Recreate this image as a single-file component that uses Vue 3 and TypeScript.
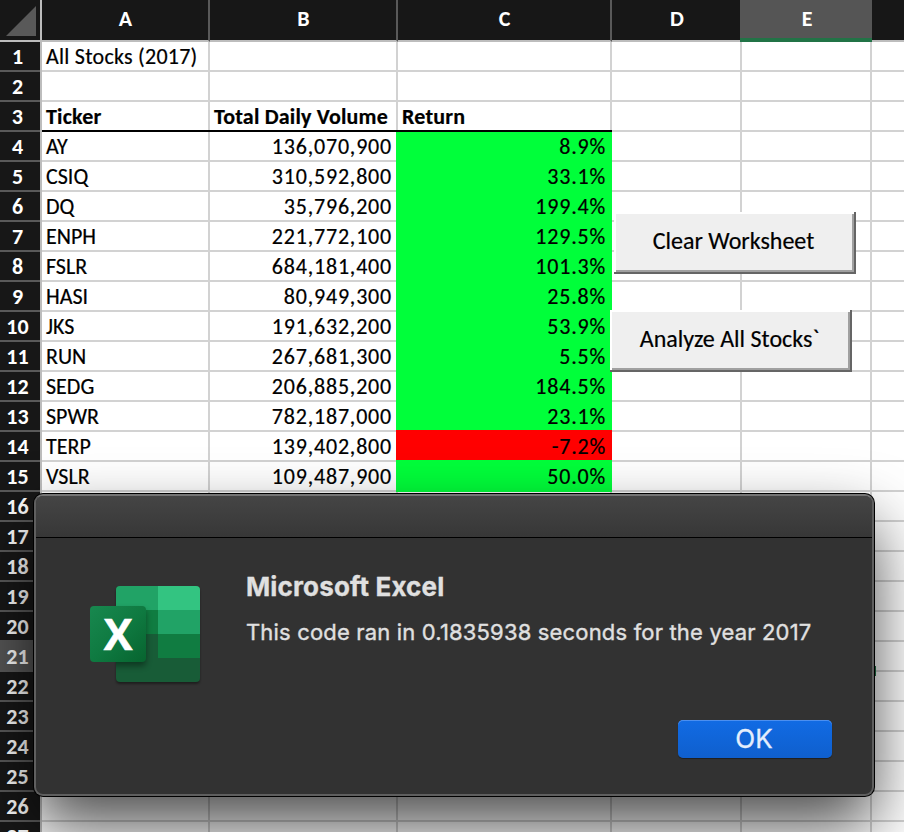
<script setup lang="ts">
interface Stock {
  ticker: string
  volume: string
  ret: string
}

interface Row {
  n: number
  a: string
  b: string
  c: string
  kind: 'plain' | 'head' | 'gain' | 'loss'
}

const columns: string[] = ['A', 'B', 'C', 'D', 'E', '']
const activeColumn = 'E'
const activeRow = 21

const stocks: Stock[] = [
  { ticker: 'AY', volume: '136,070,900', ret: '8.9%' },
  { ticker: 'CSIQ', volume: '310,592,800', ret: '33.1%' },
  { ticker: 'DQ', volume: '35,796,200', ret: '199.4%' },
  { ticker: 'ENPH', volume: '221,772,100', ret: '129.5%' },
  { ticker: 'FSLR', volume: '684,181,400', ret: '101.3%' },
  { ticker: 'HASI', volume: '80,949,300', ret: '25.8%' },
  { ticker: 'JKS', volume: '191,632,200', ret: '53.9%' },
  { ticker: 'RUN', volume: '267,681,300', ret: '5.5%' },
  { ticker: 'SEDG', volume: '206,885,200', ret: '184.5%' },
  { ticker: 'SPWR', volume: '782,187,000', ret: '23.1%' },
  { ticker: 'TERP', volume: '139,402,800', ret: '-7.2%' },
  { ticker: 'VSLR', volume: '109,487,900', ret: '50.0%' },
]

const rows: Row[] = Array.from({ length: 27 }, (_, i): Row => {
  const n = i + 1
  if (n === 1) return { n, a: 'All Stocks (2017)', b: '', c: '', kind: 'plain' }
  if (n === 3) return { n, a: 'Ticker', b: 'Total Daily Volume', c: 'Return', kind: 'head' }
  const s = stocks[n - 4]
  if (!s) return { n, a: '', b: '', c: '', kind: 'plain' }
  return { n, a: s.ticker, b: s.volume, c: s.ret, kind: s.ret.startsWith('-') ? 'loss' : 'gain' }
})
</script>

<template>
  <main class="window">
    <div class="sheet">
      <div class="line header">
        <div class="corner">
          <svg width="30" height="30" viewBox="0 0 30 30"><path d="M30 0V30H0Z" fill="#595959" /></svg>
        </div>
        <div v-for="(c, i) in columns" :key="i" class="col" :class="{ active: c === activeColumn, last: c === '' }">{{ c }}</div>
      </div>
      <div v-for="r in rows" :key="r.n" class="line" :class="r.kind">
        <div class="num" :class="{ active: r.n === activeRow, before: r.n === activeRow - 1 }">{{ r.n }}</div>
        <div class="cell a"><span>{{ r.a }}</span></div>
        <div class="cell b"><span>{{ r.b }}</span></div>
        <div class="cell c"><span>{{ r.c }}</span></div>
        <div class="cell"></div>
        <div class="cell"></div>
        <div class="cell last"></div>
      </div>
    </div>

    <button class="macro clear">Clear Worksheet</button>
    <button class="macro analyze">Analyze All Stocks`</button>
    <i class="handle"></i>

    <section class="dialog" role="dialog">
      <div class="titlebar"></div>
      <div class="content">
        <svg class="logo" width="118" height="112" viewBox="0 0 118 112">
          <defs>
            <linearGradient id="tile" x1="0" y1="0" x2="1" y2="1">
              <stop offset="0" stop-color="#18884f" />
              <stop offset="0.5" stop-color="#0f7a41" />
              <stop offset="1" stop-color="#07642f" />
            </linearGradient>
            <clipPath id="book"><rect x="30" y="6" width="84" height="96" rx="4" /></clipPath>
            <filter id="soft" x="-30%" y="-30%" width="160%" height="160%"><feGaussianBlur stdDeviation="3" /></filter>
            <filter id="edge" x="-10%" y="-10%" width="120%" height="120%"><feGaussianBlur stdDeviation="1.2" /></filter>
          </defs>
          <rect x="30" y="8" width="84" height="96" rx="4" fill="#000" opacity=".4" filter="url(#edge)" />
          <g clip-path="url(#book)">
            <rect x="30" y="6" width="84" height="96" fill="#185c37" />
            <rect x="30" y="6" width="42" height="24" fill="#21a366" />
            <rect x="72" y="6" width="42" height="24" fill="#33c481" />
            <rect x="30" y="30" width="42" height="24" fill="#107c41" />
            <rect x="72" y="30" width="42" height="24" fill="#21a366" />
            <rect x="72" y="54" width="42" height="24" fill="#107c41" />
            <rect x="4" y="30" width="56" height="56" rx="4" fill="#000" opacity=".4" filter="url(#soft)" />
          </g>
          <rect x="4" y="26" width="56" height="56" rx="4" fill="url(#tile)" />
          <text x="32.200" y="69.500" class="mark">X</text>
        </svg>
        <div class="message">
          <h1>Microsoft Excel</h1>
          <p>This code ran in 0.1835938 seconds for the year 2017</p>
        </div>
      </div>
      <div class="actions"><button class="ok">OK</button></div>
    </section>
  </main>
</template>

<style>
body {
  margin: 0;
  overflow: hidden;
}
</style>

<style scoped>
* {
  box-sizing: border-box;
}
.window {
  position: relative;
  width: 904px;
  height: 832px;
  overflow: hidden;
  background: #fff;
  font-family: Carlito, Lato, sans-serif;
  font-size: 22px;
  line-height: 26px;
  color: #000;
}
.line {
  display: grid;
  grid-template-columns: 42px 168px 188px 214px 130px 130px 32px;
  height: 30px;
  position: relative;
}
.header {
  height: 42px;
}
.corner,
.col {
  background: #171717;
  border-bottom: 2px solid #bdbdbd;
}
.corner {
  padding: 6px 0 0 6px;
  border-right: 2px solid #bdbdbd;
}
.corner svg {
  display: block;
}
.col {
  display: flex;
  align-items: center;
  justify-content: center;
  padding: 0 0 2px 1px;
  border-right: 2px solid #595959;
  color: #fff;
  font-weight: 700;
}
.col:nth-child(5) {
  padding-left: 0;
  border-right: 0;
}
.col.active {
  margin-left: -2px;
  padding: 0 0 0 2px;
  background: #555;
  border-right: 0;
  border-bottom: 4px solid #217346;
}
.col.last {
  border-right: 0;
}
.num {
  display: flex;
  align-items: center;
  justify-content: center;
  padding: 0 5px 0 0;
  background: #171717;
  border-right: 2px solid #bdbdbd;
  color: #fff;
  font-weight: 700;
  box-shadow: inset 0 -2px #595959;
}
.num.before {
  box-shadow: inset 0 -2px #555;
}
.num.active {
  background: #555;
}
.cell {
  display: flex;
  align-items: center;
  padding: 2px 4px 0;
  border-right: 2px solid #d2d2d2;
  border-bottom: 2px solid #d2d2d2;
  white-space: nowrap;
  -webkit-text-stroke: 0.2px currentColor;
}
.plain .a {
  letter-spacing: 0.25px;
}
.cell.last {
  border-right: 0;
}
.head {
  z-index: 2;
  font-weight: 700;
  letter-spacing: 0.2px;
}
.head .a,
.head .b,
.head .c {
  height: 28px;
  border-bottom: 0;
  box-shadow: 0 2px #000;
}
.gain .b,
.gain .c,
.loss .b,
.loss .c {
  justify-content: flex-end;
  letter-spacing: 0.8px;
}
.gain .c,
.loss .c {
  position: relative;
  margin: -2px 0 0 -2px;
  padding-top: 4px;
}
.gain .c {
  background: #00ff3a;
  border-color: #00ff3a;
}
.loss .c {
  background: #f00;
  border-color: #f00;
}
.gain + .loss .c {
  border-bottom-color: #00ff3a;
}
.macro {
  position: absolute;
  width: 242px;
  height: 62px;
  padding: 0 3px 5px 0;
  border: 0;
  background: #efefef;
  box-shadow: inset -2px -2px #656565, inset 2px 2px #fff, inset -4px -4px #a0a0a0;
  font: 400 24px Carlito, Lato, sans-serif;
  color: #000;
  z-index: 3;
  -webkit-text-stroke: 0.2px currentColor;
}
.clear {
  left: 614px;
  top: 212px;
}
.analyze {
  left: 610px;
  top: 310px;
}
.handle {
  position: absolute;
  left: 868px;
  top: 666px;
  width: 8px;
  height: 10px;
  background: #217346;
}
.dialog {
  position: absolute;
  z-index: 4;
  left: 34px;
  top: 494px;
  width: 840px;
  height: 302px;
  display: flex;
  flex-direction: column;
  border: 2px solid #5f5f5f;
  border-top-color: #757575;
  border-radius: 9px;
  background: #323232;
  box-shadow: 0 0 0 1px #000, 0 30px 64px rgba(0, 0, 0, 0.7);
  color: #e0e0e0;
  font-family: Inter, sans-serif;
}
.titlebar {
  height: 42px;
  flex: none;
  border-bottom: 1px solid #000;
  border-radius: 7px 7px 0 0;
  background: linear-gradient(#454545, #373737);
}
.content {
  display: flex;
  gap: 42px;
  padding: 42px 0 0 50px;
}
.logo {
  flex: none;
}
.mark {
  fill: #fff;
  stroke: #fff;
  stroke-width: 0.6px;
  font: 700 43px 'Open Sans', sans-serif;
  text-anchor: middle;
}
h1 {
  margin: -9px 0 0;
  font-size: 26px;
  line-height: 32px;
  font-weight: 700;
  letter-spacing: 0.15px;
  white-space: nowrap;
  -webkit-text-stroke: 0.3px currentColor;
}
p {
  margin: 15px 0 0;
  font-size: 22px;
  line-height: 28px;
  letter-spacing: 0.17px;
  white-space: nowrap;
  -webkit-text-stroke: 0.35px currentColor;
}
.actions {
  display: flex;
  justify-content: flex-end;
  margin-top: auto;
  padding: 0 40px 36px 0;
}
.ok {
  width: 154px;
  height: 38px;
  padding: 0 2px 2px 0;
  border: 0;
  border-radius: 5px;
  background: linear-gradient(#116be4, #0f5fcd);
  box-shadow: inset 0 1px #4b8ff0, 0 1px 1px rgba(0, 0, 0, 0.4);
  color: #e4eefc;
  font: 400 26px Inter, sans-serif;
  -webkit-text-stroke: 0.3px currentColor;
}
</style>
